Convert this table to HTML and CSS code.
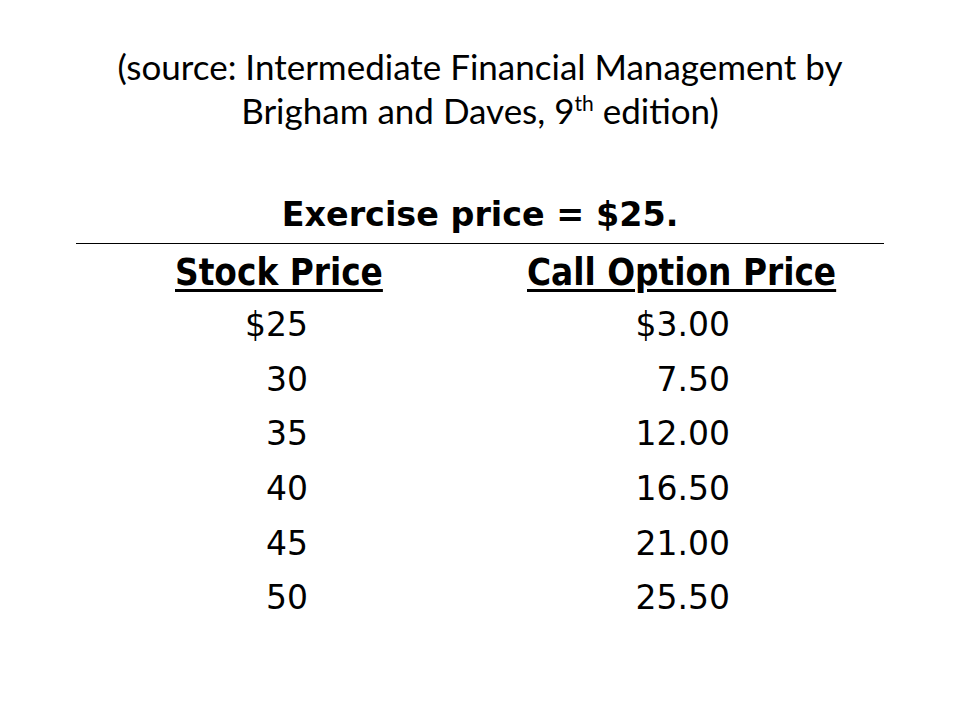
FILE: index.html
```html
<!DOCTYPE html>
<html>
<head>
<meta charset="utf-8">
<link rel="stylesheet" href="styles.css">
</head>
<body>
<div class="slide">
  <h1 class="title">(source: Intermediate Financial Management by<br>Brigham and Daves, 9<sup>th</sup> edition)</h1>
  <div class="exercise">Exercise price = $25.</div>
  <div class="rule"></div>
  <div class="table">
    <div class="head head-stock">Stock Price</div>
    <div class="head head-call">Call Option Price</div>
    <div class="num stock">$25</div><div class="num call">$3.00</div>
    <div class="num stock">30</div><div class="num call">7.50</div>
    <div class="num stock">35</div><div class="num call">12.00</div>
    <div class="num stock">40</div><div class="num call">16.50</div>
    <div class="num stock">45</div><div class="num call">21.00</div>
    <div class="num stock">50</div><div class="num call">25.50</div>
  </div>
</div>
</body>
</html>
```
FILE: styles.css
```css
html, body {
  margin: 0;
  padding: 0;
  background: #fff;
}
.slide {
  width: 960px;
  height: 720px;
  overflow: hidden;
  color: #000;
  display: flex;
  flex-direction: column;
}
.title {
  margin: 0;
  padding-top: 43.5px;
  font-family: Lato, "Open Sans", sans-serif;
  font-weight: 400;
  font-size: 35px;
  line-height: 44px;
  text-align: center;
}
.title sup {
  font-size: 21px;
  line-height: 0;
  vertical-align: 13px;
}
.exercise {
  margin-top: 63px;
  font-family: "DejaVu Sans", Verdana, sans-serif;
  font-weight: 700;
  font-size: 33.4px;
  line-height: 40px;
  text-align: center;
}
.rule {
  margin: 8.5px 76px 0 76px;
  height: 1px;
  background: #000;
}
.table {
  display: grid;
  grid-template-columns: 479px 481px;
  grid-template-rows: 47.2px repeat(6, 54.6px);
  margin-top: 7px;
}
.head {
  font-family: "DejaVu Sans Condensed", "DejaVu Sans", sans-serif;
  font-weight: 700;
  font-size: 36.5px;
  line-height: 44px;
  text-decoration: underline;
  text-decoration-thickness: 3px;
  text-underline-offset: 4px;
}
.head-stock { padding-left: 175px; }
.head-call { padding-left: 48px; }
.num {
  font-family: "DejaVu Sans", Tahoma, sans-serif;
  font-size: 33px;
  line-height: 54.6px;
  text-align: right;
}
.stock { padding-right: 171px; }
.call { padding-right: 230px; }
```
